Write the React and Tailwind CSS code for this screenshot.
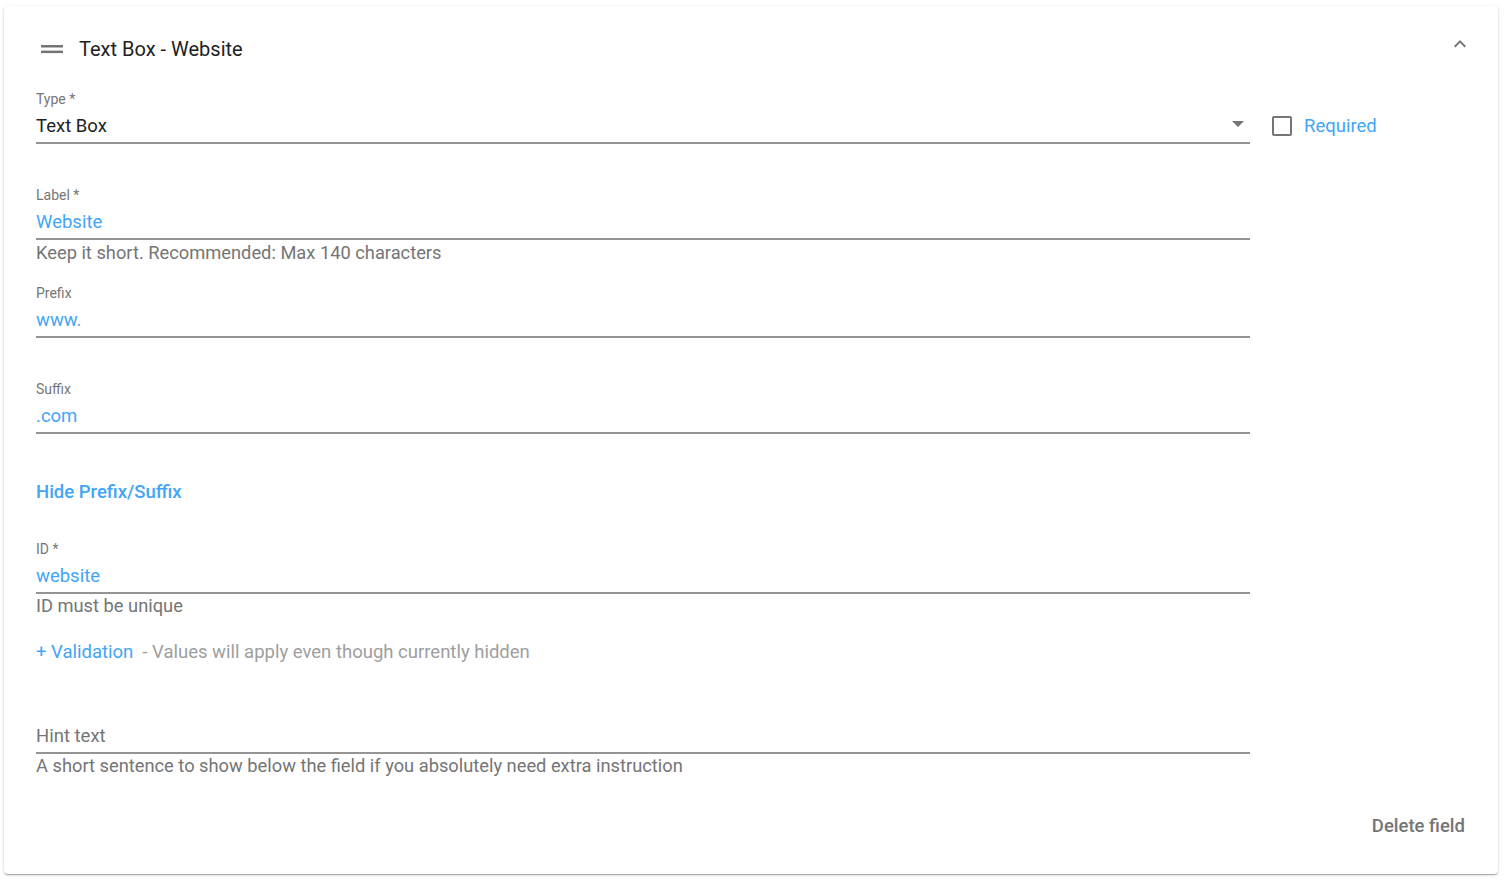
import React from 'react';

const font = { fontFamily: 'Roboto, "Noto Sans", sans-serif' };

function Field({ label, value, blue, placeholder, top, arrow }) {
  return (
    <div className={`w-[1214px] ${top}`}>
      <div className="h-4 text-[14px] leading-4 text-[#757575]">{label}</div>
      <div className="mt-[7px] flex items-center justify-between border-b-2 border-[#949494] pb-[4px]">
        <span
          className={`h-6 text-[18.5px] leading-6 ${
            placeholder ? 'text-[#757575]' : blue ? 'text-[#42a5f5]' : 'text-[#212121]'
          }`}
        >
          {value}
        </span>
        {arrow && (
          <svg width="12" height="6" viewBox="0 0 12 6" className="mr-[6px] mt-[-4px]">
            <path d="M0 0h12L6 6z" fill="#757575" />
          </svg>
        )}
      </div>
    </div>
  );
}

function Helper({ children, top = 'mt-[3px]' }) {
  return <div className={`${top} h-5 whitespace-nowrap text-[18.3px] leading-5 text-[#757575]`}>{children}</div>;
}

export default function App() {
  return (
    <div className="min-h-[880px] bg-white pt-[6px] pl-[4px]" style={font}>
      <div className="relative h-[868px] w-[1494px] rounded-[4px] bg-white pl-[32px] pt-[31px] shadow-[0_1px_3px_rgba(0,0,0,0.2),0_1px_1px_rgba(0,0,0,0.14),0_2px_1px_-1px_rgba(0,0,0,0.12)]">
        {/* header */}
        <div className="flex h-6 items-center">
          <svg width="22" height="9" viewBox="0 0 22 9" className="ml-[5px]">
            <rect x="0" y="0" width="22" height="2.5" fill="#757575" />
            <rect x="0" y="5.6" width="22" height="2.5" fill="#757575" />
          </svg>
          <span className="ml-[16px] text-[20px] leading-6 text-[#212121]">Text Box - Website</span>
        </div>
        <div className="absolute right-[26px] top-[26px]">
          <svg width="24" height="24" viewBox="0 0 24 24">
            <path d="M12 8l-6 6 1.41 1.41L12 10.83l4.59 4.58L18 14z" fill="#757575" />
          </svg>
        </div>

        {/* type */}
        <div className="mt-[30px] flex items-start">
          <Field label="Type *" value="Text Box" arrow />
          <div className="ml-[22px] mt-[23px] flex h-6 items-center">
            <div className="h-[20px] w-[20px] rounded-[2px] border-2 border-[#757575]" />
            <span className="ml-[12px] text-[18.5px] leading-6 text-[#42a5f5]">Required</span>
          </div>
        </div>

        <Field label="Label *" value="Website" blue top="mt-[43px]" />
        <Helper>Keep it short. Recommended: Max 140 characters</Helper>

        <Field label="Prefix" value="www." blue top="mt-[22px]" />
        <Field label="Suffix" value=".com" blue top="mt-[43px]" />

        <div className="mt-[46px] h-6 text-[18.5px] font-medium leading-6 text-[#42a5f5]">Hide Prefix/Suffix</div>

        <Field label="ID *" value="website" blue top="mt-[37px]" />
        <Helper top="mt-[2px]">ID must be unique</Helper>

        <div className="mt-[24px] flex h-6 items-center text-[18.5px] leading-6">
          <span className="text-[#42a5f5]">+ Validation</span>
          <span className="ml-[9px] text-[#9e9e9e]">- Values will apply even though currently hidden</span>
        </div>

        <Field label="" value="Hint text" placeholder top="mt-[37px]" />
        <Helper top="mt-[2px]">A short sentence to show below the field if you absolutely need extra instruction</Helper>

        <div className="mt-[38px] flex h-6 justify-end pr-[33px]">
          <span className="text-[18.5px] font-medium leading-6 text-[#757575]">Delete field</span>
        </div>
      </div>
    </div>
  );
}
